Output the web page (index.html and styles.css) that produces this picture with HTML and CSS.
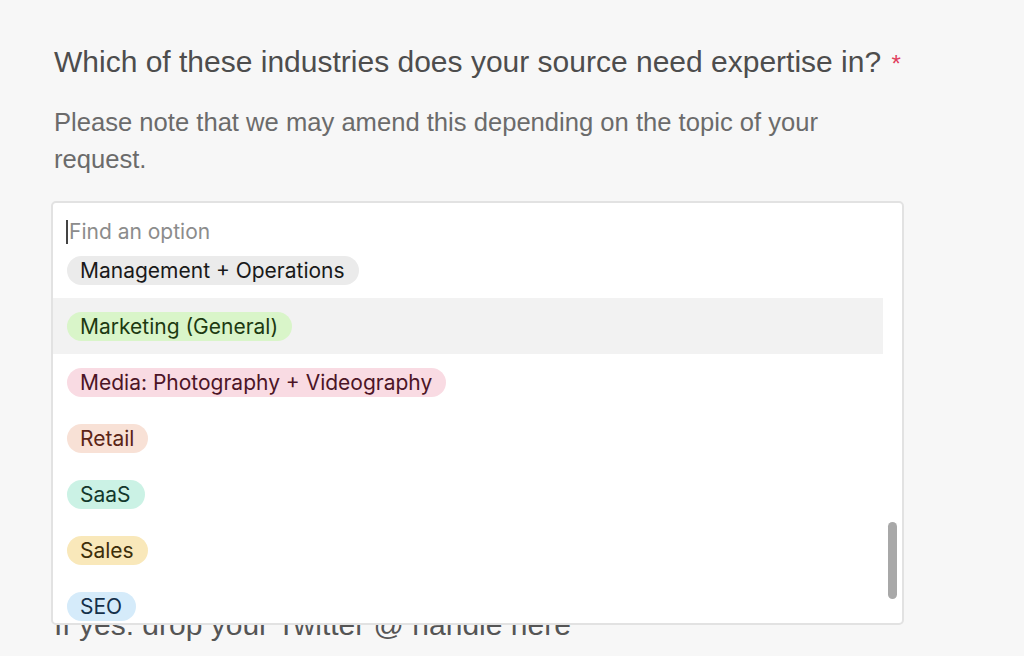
FILE: index.html
```html
<!DOCTYPE html>
<html>
<head>
<meta charset="utf-8"/>
<title>Industries</title>
<link rel="stylesheet" href="styles.css">
</head>
<body>
  <div class="form">
    <div class="question">
      <h2 class="label">Which of these industries does your source need expertise in? <span class="required">*</span></h2>
      <p class="note">Please note that we may amend this depending on the topic of your request.</p>
      <div class="field">
        <div class="popover">
          <div class="search"><span class="caret"></span><span class="placeholder">Find an option</span></div>
          <ul class="options">
            <li class="option"><span class="tag tag_gray">Management + Operations</span></li>
            <li class="option option_active"><span class="tag tag_green">Marketing (General)</span></li>
            <li class="option"><span class="tag tag_pink">Media: Photography + Videography</span></li>
            <li class="option"><span class="tag tag_orange">Retail</span></li>
            <li class="option"><span class="tag tag_teal">SaaS</span></li>
            <li class="option"><span class="tag tag_yellow">Sales</span></li>
            <li class="option"><span class="tag tag_blue">SEO</span></li>
          </ul>
          <div class="scroll_thumb"></div>
        </div>
      </div>
    </div>
    <div class="question">
      <h2 class="label label_next">If yes: drop your Twitter @ handle here</h2>
    </div>
  </div>
</body>
</html>
```

FILE: styles.css
```css
*{
  box-sizing:border-box;
}
body{
  margin:0;
  background-color:#f7f7f7;
  font-family:"Liberation Sans", Arial, sans-serif;
}
.form{
  padding:43px 0 0 54px;
}
.label{
  margin:0;
  font-size:30px;
  line-height:38px;
  font-weight:normal;
  white-space:nowrap;
  color:#4d4d4d;
}
.required{
  color:#e0405e;
  font-size:24px;
  margin-left:2px;
}
.note{
  max-width:790px;
  margin:21px 0 0;
  font-size:25.6px;
  line-height:37px;
  color:#6b6b6b;
}
.field{
  position:relative;
  height:405px;
  margin-top:23px;
}
.label_next{
  color:#555;
}
.popover{
  position:absolute;
  top:0;
  left:-3px;
  z-index:2;
  width:853px;
  height:424px;
  background-color:#fff;
  border:2px solid #e2e2e2;
  border-radius:5px;
  overflow:hidden;
}
.search{
  display:flex;
  align-items:center;
  height:39px;
  padding:18px 14px 0 13px;
  font-family:Inter, "Liberation Sans", sans-serif;
  font-size:21px;
  line-height:24px;
  color:#8c8c8c;
}
.caret{
  width:2px;
  height:24px;
  margin-right:1px;
  background-color:#444;
}
.options{
  list-style:none;
  margin:0;
  padding:0;
  width:830px;
}
.option{
  display:flex;
  align-items:center;
  height:56px;
  padding-left:14px;
}
.option_active{
  background-color:#f2f2f2;
}
.tag{
  display:inline-flex;
  align-items:center;
  height:29px;
  padding:0 14px 0 13px;
  border-radius:15px;
  font-family:Inter, "Liberation Sans", sans-serif;
  font-size:21px;
  white-space:nowrap;
}
.tag_gray{ background-color:#ebebeb; color:#191919; }
.tag_green{ background-color:#d9f5c9; color:#1d3a12; }
.tag_pink{ background-color:#f9dbe3; color:#4c1526; }
.tag_orange{ background-color:#f8e1d6; color:#5b2516; }
.tag_teal{ background-color:#cbf2e5; color:#13382c; }
.tag_yellow{ background-color:#f9e8ba; color:#3d2e0a; }
.tag_blue{ background-color:#d5ebfa; color:#14304a; }
.scroll_thumb{
  position:absolute;
  left:835px;
  top:319px;
  width:9px;
  height:77px;
  border-radius:5px;
  background-color:#a8a8a8;
}
```
